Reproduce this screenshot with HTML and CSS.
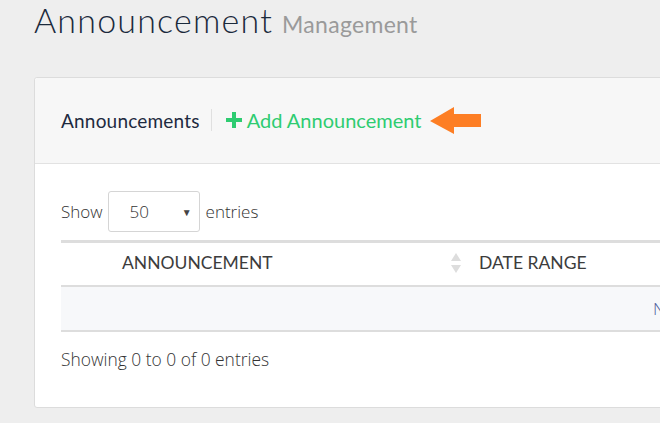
FILE: index.html
```html
<!DOCTYPE html>
<html>
<head>
<meta charset="utf-8">
<link rel="stylesheet" href="styles.css">
</head>
<body>
<div class="page">
  <h1 class="title"><span>Announcement</span><small class="subtitle">Management</small></h1>
  <div class="card">
    <div class="card-head">
      <span class="card-title">Announcements</span>
      <span class="sep"></span>
      <a class="add-link"><svg class="plus" width="16" height="16" viewBox="0 0 16 16"><rect x="6" y="0" width="4" height="16" fill="#2ecc71"/><rect x="0" y="6" width="16" height="4" fill="#2ecc71"/></svg>Add Announcement</a>
      <svg class="arrow" width="52" height="28" viewBox="0 0 52 28"><polygon points="0,15 24,1 24,8 51,8 51,21 24,21 24,28" fill="#fd7e24"/></svg>
    </div>
    <div class="card-body">
      <div class="length">
        <span>Show</span>
        <div class="select"><span>50</span><span class="caret">&#9660;</span></div>
        <span>entries</span>
      </div>
      <div class="table">
        <div class="thead">
          <div class="c0"></div>
          <div class="c1"><span>ANNOUNCEMENT</span><svg class="sort" width="10" height="20" viewBox="0 0 10 20"><polygon points="5,0 10,8 0,8" fill="#ddd"/><polygon points="0,12 10,12 5,20" fill="#ddd"/></svg></div>
          <div class="c2">DATE RANGE</div>
        </div>
        <div class="trow"><span class="empty">No data available in table</span></div>
      </div>
      <div class="info">Showing 0 to 0 of 0 entries</div>
    </div>
  </div>
</div>
</body>
</html>
```
FILE: styles.css
```css
html, body { margin: 0; padding: 0; overflow: hidden; }
body { background: #eeeeee; font-family: Lato, "Open Sans", sans-serif; width: 660px; height: 423px; }
.page { padding-left: 34px; padding-top: 2px; }
.title { margin: 0; height: 36px; display: flex; align-items: baseline; font-weight: 300; font-size: 34px; line-height: 36px; color: #1b2a3c; letter-spacing: 1.2px; }
.subtitle { font-size: 23px; line-height: 36px; color: #9a9a9a; font-weight: 400; margin-left: 9px; letter-spacing: 0.3px; }
.card { margin-top: 39px; width: 680px; background: #fff; border: 1px solid #dcdcdc; border-radius: 3px; box-sizing: border-box; height: 331px; }
.card-head { height: 86px; background: #f7f7f7; border-bottom: 1px solid #e2e2e2; display: flex; align-items: center; padding-left: 26px; padding-bottom: 1px; box-sizing: border-box; border-radius: 3px 3px 0 0; }
.card-title { font-size: 19px; color: #1e2a40; letter-spacing: 0.2px; }
.sep { width: 1px; height: 22px; background: #e0e0e0; margin: 0 14px 0 11px; }
.add-link { display: flex; align-items: center; font-size: 20px; color: #2ecc71; }
.plus { margin-right: 5px; }
.arrow { margin-left: 9px; }
.card-body { padding: 27px 0 0 26px; font-family: "Open Sans", sans-serif; font-weight: 300; }
.length { display: flex; align-items: center; font-size: 17px; color: #333; height: 41px; }
.select { width: 92px; height: 41px; box-sizing: border-box; border: 1px solid #d5d5d5; border-radius: 3px; margin: 0 6px 0 5px; display: flex; align-items: center; justify-content: space-between; padding: 0 7px 0 21px; background: #fff; color: #333; }
.caret { font-size: 10px; color: #444; }
.table { margin-top: 8px; border-top: 3px solid #dddddd; }
.thead { display: flex; height: 44px; align-items: center; border-bottom: 2px solid #dddddd; font-family: Lato, sans-serif; font-weight: 400; font-size: 17.5px; color: #3c3c3c; padding-bottom: 3px; box-sizing: border-box; }
.c0 { width: 61px; }
.c1 { width: 339px; display: flex; justify-content: space-between; align-items: center; padding-right: 18px; }
.trow { height: 43px; background: #f7f8fa; border-bottom: 2px solid #dddddd; display: flex; align-items: center; padding-left: 592px; font-size: 17px; color: #4f5e9c; white-space: nowrap; overflow: hidden; }
.info { margin-top: 15px; font-size: 17.4px; color: #333; }
```
